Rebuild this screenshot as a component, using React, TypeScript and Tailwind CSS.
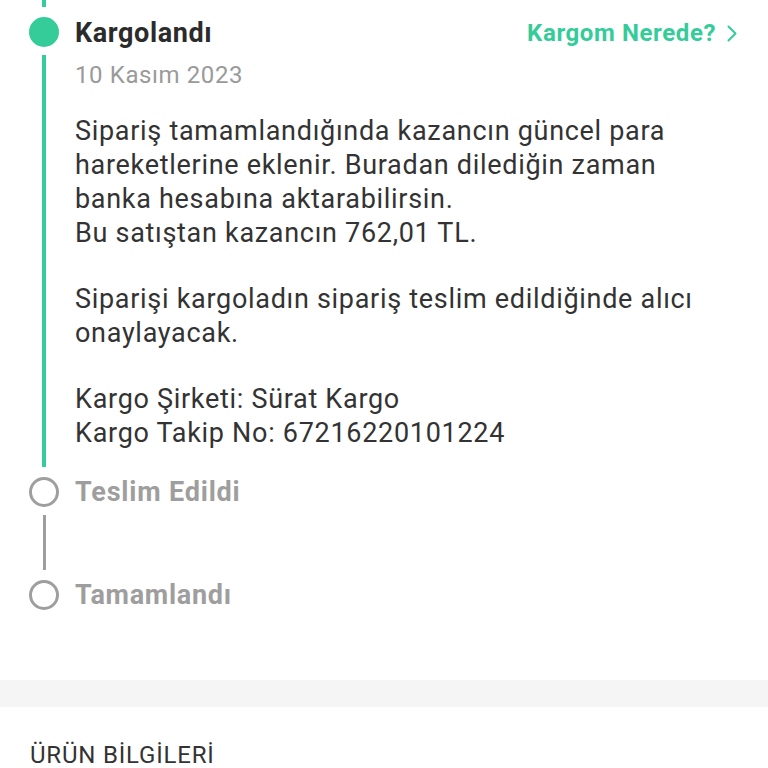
const green = 'bg-[#34cc99]';

export default function App() {
  return (
    <div className="w-[768px] h-[768px] overflow-hidden bg-white font-['Roboto',sans-serif] text-[#333333]">
      {/* Timeline */}
      <div className="pl-[29px] pr-[31px]">
        {/* Kargolandı */}
        <div className="flex gap-[16px]">
          <div className="flex w-[30px] flex-col items-center">
            <div className={`h-[7px] w-1 ${green}`} />
            <div className={`mt-[10px] h-[30px] w-[30px] rounded-full ${green}`} />
            <div className={`mt-[8px] mb-[10px] w-1 flex-1 ${green}`} />
          </div>
          <div className="flex-1 pt-[18px] pb-[27px]">
            <div className="flex items-center justify-between">
              <span className="text-[27px] font-bold leading-[30px] tracking-[0.6px] text-[#2b2b2b]">Kargolandı</span>
              <span className="flex items-center gap-[11px] text-[24px] font-bold leading-[30px] tracking-[0.6px] text-[#34cc99]">
                Kargom Nerede?
                <svg width="10" height="17" viewBox="0 0 10 17" fill="none">
                  <polyline points="1.5,1.5 8.5,8.5 1.5,15.5" stroke="#34cc99" strokeWidth="2" strokeLinecap="round" strokeLinejoin="round" />
                </svg>
              </span>
            </div>
            <div className="mt-[13px] text-[24px] leading-[28px] tracking-[0.6px] text-[#9a9a9a]">10 Kasım 2023</div>
            <div className="mt-[25px] text-[27px] leading-[34px] tracking-[0.7px] text-[#333333]">
              <p>
                Sipariş tamamlandığında kazancın güncel para hareketlerine eklenir. Buradan dilediğin zaman banka
                hesabına aktarabilirsin.
              </p>
              <p>Bu satıştan kazancın 762,01 TL.</p>
              <p className="mt-[32px]">Siparişi kargoladın sipariş teslim edildiğinde alıcı onaylayacak.</p>
              <p className="mt-[32px]">Kargo Şirketi: Sürat Kargo</p>
              <p>Kargo Takip No: 67216220101224</p>
            </div>
          </div>
        </div>

        {/* Teslim Edildi */}
        <div className="flex gap-[16px]">
          <div className="flex w-[30px] flex-col items-center">
            <div className="h-[30px] w-[30px] rounded-full border-[3px] border-[#9e9e9e]" />
            <div className="mt-[8px] mb-[10px] h-[55px] w-[3px] bg-[#9e9e9e]" />
          </div>
          <div className="text-[27px] font-bold leading-[30px] tracking-[0.8px] text-[#9e9e9e]">Teslim Edildi</div>
        </div>

        {/* Tamamlandı */}
        <div className="flex gap-[16px]">
          <div className="flex w-[30px] flex-col items-center">
            <div className="h-[30px] w-[30px] rounded-full border-[3px] border-[#9e9e9e]" />
          </div>
          <div className="text-[27px] font-bold leading-[30px] tracking-[0.7px] text-[#9e9e9e]">Tamamlandı</div>
        </div>
      </div>

      <div className="mt-[70px] h-[27px] bg-[#f5f5f5]" />

      <div className="mt-[35px] px-[30px] text-[24px] leading-[26px] tracking-[0.8px] text-[#333333]">ÜRÜN BİLGİLERİ</div>
    </div>
  );
}
